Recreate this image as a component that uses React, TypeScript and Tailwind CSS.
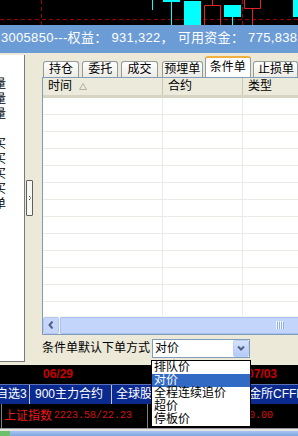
import React from "react";

const leftGlyphs = ["量", "量", "量", "", "买", "买", "买", "买", "单"];

const tabs = [
  { label: "持仓", cls: "ml-px w-[39px]" },
  { label: "委托", cls: "ml-[3px] w-[39px]" },
  { label: "成交", cls: "ml-[3px] w-[39px]" },
  { label: "预埋单", cls: "ml-[4px] w-[44px]" },
];

const options = ["排队价", "对价", "全程连续追价", "超价", "停板价"];

function Chart() {
  return (
    <svg width="298" height="25" className="block">
      <rect width="298" height="25" fill="#000" />
      <line x1="0" y1="19.5" x2="298" y2="19.5" stroke="#a00000" strokeDasharray="4 3" />
      <line x1="41.5" y1="0" x2="41.5" y2="25" stroke="#a00000" strokeDasharray="4 3" />
      <line x1="242.5" y1="0" x2="242.5" y2="25" stroke="#a00000" strokeDasharray="4 3" />
      <line x1="152.5" y1="0" x2="152.5" y2="10" stroke="#00ffff" />
      <rect x="163" y="0" width="17" height="2" fill="#00ffff" />
      <line x1="171.5" y1="2" x2="171.5" y2="25" stroke="#00ffff" />
      <rect x="184" y="1" width="17" height="24" fill="#00ffff" />
      <line x1="212.5" y1="0" x2="212.5" y2="5" stroke="#e02424" />
      <path d="M204.5 25V5.5H220.5V25" fill="none" stroke="#e02424" />
      <rect x="224" y="5" width="17" height="12" fill="#00ffff" />
      <line x1="232.5" y1="17" x2="232.5" y2="25" stroke="#00ffff" />
      <path d="M244.5 0V8.5H260.5V0" fill="none" stroke="#e02424" />
      <line x1="252.5" y1="8" x2="252.5" y2="25" stroke="#e02424" />
      <rect x="293" y="0" width="5" height="17" fill="#00ffff" />
    </svg>
  );
}

function Tab({ label, cls }: { label: string; cls: string }) {
  return (
    <div
      className={`${cls} h-[16px] rounded-t-[3px] border border-b-0 border-[#919b9c] bg-gradient-to-b from-white to-[#ecebe5] text-center text-[12px] leading-[15px]`}
    >
      {label}
    </div>
  );
}

function App() {
  return (
    <div className="relative h-[436px] w-[298px] overflow-hidden bg-[#ece9d8] font-['Liberation_Sans','Noto_Sans_CJK_SC',sans-serif] text-black">
      <Chart />

      <div className="h-[28px] overflow-hidden whitespace-nowrap bg-[#6c9cd6] pl-px text-[13px] leading-[26px] tracking-[0.3px] text-white">
        3005850---权益：&nbsp;931,322，&nbsp;可用资金：&nbsp;775,838
      </div>

      {/* main window area */}
      <div className="flex h-[312px]">
        <div className="mt-[2px] mb-[3px] w-[25px] overflow-hidden border-r border-b border-[#7a7a7a] bg-white pt-[22px]">
          {leftGlyphs.map((g, i) => (
            <div key={i} className="-ml-[6px] h-[15px] whitespace-nowrap text-[12px] leading-[15px]">
              {g}
            </div>
          ))}
        </div>

        <div className="w-[17px] pt-[127px]">
          <div className="ml-px flex h-[36px] w-[7px] items-center justify-center rounded-[1px] border border-[#5f5f5f] bg-[#f7f7f3]">
            <svg width="2" height="4">
              <path d="M0 0h1v1h-1zM1 1.5h1v1h-1zM0 3h1v1h-1z" fill="#444" />
            </svg>
          </div>
        </div>

        <div className="flex min-w-0 flex-1 flex-col">
          <div className="flex h-[24px] items-end">
            {tabs.map((t) => (
              <Tab key={t.label} {...t} />
            ))}
            <div className="ml-[2px] h-[21px] w-[50px] rounded-t-[3px] border border-b-0 border-[#919b9c] border-t-[2px] border-t-[#f2b13e] bg-white pt-[2px] text-center text-[12px] leading-[15px]">
              条件单
            </div>
            <div className="ml-[2px] h-[16px] w-[45px] shrink-0 rounded-t-[3px] border border-b-0 border-[#919b9c] bg-gradient-to-b from-white to-[#ecebe5] pl-[4px] text-[12px] leading-[15px] whitespace-nowrap">
              止损单
            </div>
          </div>

          {/* list view */}
          <div className="flex h-[258px] flex-col border-t border-l border-b border-[#7f9db9]">
            <div className="grid h-[20px] grid-cols-[120px_80px_1fr] border-b-[3px] border-[#d8d4c4] bg-[#ebeadb] text-[12px] leading-[17px]">
              <div className="flex items-center border-r border-[#c9c6b4] pl-[5px]">
                时间
                <svg width="8" height="7" className="ml-[7px]">
                  <path d="M4 0.5L7.5 6.5H0.5Z" fill="none" stroke="#b4b1a3" />
                </svg>
              </div>
              <div className="border-r border-[#c9c6b4] pl-[5px]">合约</div>
              <div className="pl-[5px]">类型</div>
            </div>

            <div className="h-[218px] overflow-hidden bg-white">
              {Array.from({ length: 13 }).map((_, i) => (
                <div key={i} className="grid h-[17px] grid-cols-[120px_80px_1fr] border-b border-[#ebebe6]">
                  <div className="border-r border-[#ebebe6]" />
                  <div className="border-r border-[#ebebe6]" />
                  <div />
                </div>
              ))}
            </div>

            <div className="flex h-[18px] bg-[#f6f6f0] pt-px">
              <div className="flex h-[17px] w-[16px] items-center justify-center rounded-[2px] border border-[#b3c7f3] bg-[#c6d6fb]">
                <svg width="6" height="8">
                  <path d="M4.5 0.5L1.5 4L4.5 7.5" fill="none" stroke="#4d6185" strokeWidth="2" />
                </svg>
              </div>
              <div className="ml-px flex h-[17px] flex-1 items-center rounded-l-[2px] border border-r-0 border-[#a9bff1] bg-[#c4d5fc] pl-[215px]">
                <svg width="8" height="8">
                  <path d="M0.5 0v8M2.5 0v8M4.5 0v8M6.5 0v8" stroke="#f4f8ff" />
                  <path d="M1.5 1v8M3.5 1v8M5.5 1v8M7.5 1v8" stroke="#8eaef0" />
                </svg>
              </div>
            </div>
          </div>

          <div className="flex h-[31px] items-center gap-[2px] pb-[3px] text-[12px]">
            <span className="whitespace-nowrap leading-[15px]">条件单默认下单方式</span>
            <div className="flex h-[19px] w-[98px] shrink-0 border border-[#7f9db9] bg-white">
              <span className="flex-1 pl-[2px] leading-[17px]">对价</span>
              <div className="flex h-[17px] w-[16px] items-center justify-center rounded-[2px] border border-[#bccff8] bg-gradient-to-b from-[#d6e2fd] to-[#b4c9f6]">
                <svg width="8" height="6">
                  <path d="M1 1.5L4 4.5L7 1.5" fill="none" stroke="#4d6185" strokeWidth="2" />
                </svg>
              </div>
            </div>
          </div>
        </div>
      </div>

      {/* date strip */}
      <div className="grid h-[19px] grid-cols-[43px_204px_1fr] bg-black text-[12px] font-bold leading-[19px] text-[#c80000]">
        <div />
        <div>06/29</div>
        <div>07/03</div>
      </div>

      {/* group tabs */}
      <div className="flex h-[20px] overflow-hidden whitespace-nowrap border-t border-[#5870b8] bg-[#0b2a8f] text-[12px] leading-[18px] text-white">
        <div className="w-[30px] shrink-0 overflow-hidden border-r border-[#c8c8c8]">
          <div className="-ml-[4px]">自选3</div>
        </div>
        <div className="w-[82px] shrink-0 border-r border-[#c8c8c8] pl-[5px]">900主力合约</div>
        <div className="w-[120px] shrink-0 border-r border-[#c8c8c8] pl-[4px]">全球股指期货</div>
        <div className="shrink-0 pl-[5px]">中金所CFFEX</div>
      </div>

      {/* index row */}
      <div className="flex h-[24px] bg-black pl-px leading-[24px] whitespace-nowrap">
        <div className="flex w-[147px] shrink-0 border-r border-l border-[#808080] pl-[2px]">
          <span className="w-[50px] text-[12px] text-[#f01818]">上证指数</span>
          <span className="font-['Liberation_Mono',monospace] text-[10px] text-[#d81010]">2223.58/22.23</span>
        </div>
        <div className="flex shrink-0 pl-[3px]">
          <span className="w-[50px] text-[12px] text-[#f01818]">深证成指</span>
          <span className="font-['Liberation_Mono',monospace] text-[10px] text-[#d81010]">8289.25/0.00</span>
        </div>
      </div>

      {/* taskbar edge */}
      <div className="flex h-[8px] flex-col">
        <div className="h-px bg-[#9a9a9a]" />
        <div className="h-[2px] bg-[#e4e4e4]" />
        <div className="flex flex-1 bg-gradient-to-b from-[#a8c4ee] to-[#7fa6e4]">
          <div className="w-[10px] bg-[#6fbf6a]" />
        </div>
      </div>

      {/* open dropdown list */}
      <div className="absolute top-[360px] left-[151px] w-[100px] border border-black bg-white text-[12px]">
        {options.map((o) => (
          <div
            key={o}
            className={
              o === "对价"
                ? "h-[13px] bg-[#316ac5] pl-[2px] leading-[13px] text-white"
                : "h-[13px] pl-[2px] leading-[13px] whitespace-nowrap"
            }
          >
            {o}
          </div>
        ))}
      </div>
    </div>
  );
}

export default App;
